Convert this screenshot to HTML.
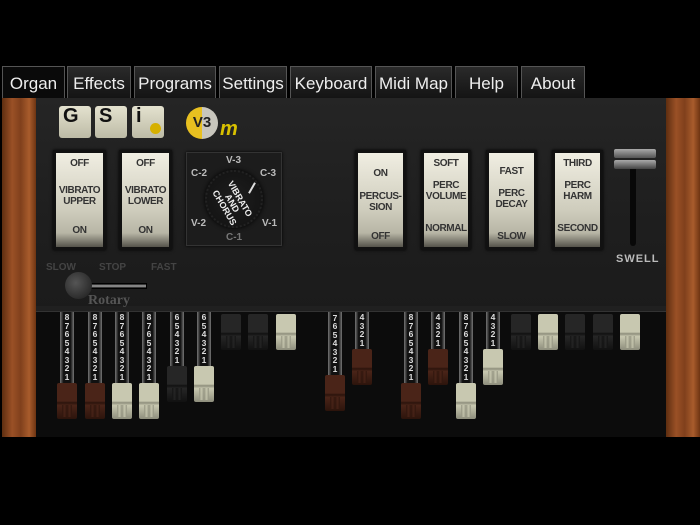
<!DOCTYPE html>
<html><head><meta charset="utf-8"><style>
*{margin:0;padding:0;box-sizing:border-box}
body{width:700px;height:525px;background:#000;position:relative;overflow:hidden;font-family:"Liberation Sans",sans-serif}
.a{position:absolute}
.tab{position:absolute;top:66px;height:32px;background:linear-gradient(#2a2a2a,#141414);border:1px solid #555;border-bottom:none;color:#eee;font-size:17px;text-align:center;line-height:34px}
.tab.on{background:#0a0a0a}
.wood{position:absolute;top:98px;height:339px;width:34px;background:linear-gradient(90deg,#5e2e10,#9a5026 30%,#80401c 55%,#a85c2c 80%,#6e3412)}
.btn{position:absolute;top:106px;width:32px;height:32px;background:linear-gradient(#e4e2cf,#bdbba6);border-radius:3px;font-weight:bold;font-size:20px;color:#111;padding-left:4px;line-height:20px}
.rock{position:absolute;top:150px;height:100px;border:3px solid #111;background:linear-gradient(#f0eee2,#cfcdbd 60%,#b8b6a6 85%,#55534b);color:#333;font-weight:bold;font-size:10px;letter-spacing:-0.4px;text-align:center;box-shadow:0 0 3px #000}
.rock div{position:absolute;left:0;right:0}
.lab{position:absolute;color:#bbb;font-size:10px;font-weight:bold}
.shaft{position:absolute;width:14px;background:linear-gradient(90deg,#777,#111 25%,#111 75%,#777);color:#ddd;font-size:8.5px;font-weight:bold;text-align:center;line-height:8.5px;top:312px}
.cap{position:absolute;width:20px;height:36px;border-radius:2px}
</style></head><body>
<div class="tab on" style="left:2px;width:63px">Organ</div>
<div class="tab" style="left:67px;width:64px">Effects</div>
<div class="tab" style="left:134px;width:82px">Programs</div>
<div class="tab" style="left:219px;width:68px">Settings</div>
<div class="tab" style="left:290px;width:82px">Keyboard</div>
<div class="tab" style="left:375px;width:77px">Midi Map</div>
<div class="tab" style="left:455px;width:63px">Help</div>
<div class="tab" style="left:521px;width:64px">About</div>

<div class="a" style="left:36px;top:98px;width:630px;height:214px;background:linear-gradient(#252525,#1e1e1e 60%,#1b1b1b)"></div>
<div class="a" style="left:36px;top:306px;width:630px;height:6px;background:#202020;border-bottom:1px solid #333"></div>
<div class="a" style="left:36px;top:312px;width:630px;height:125px;background:#0c0c0c"></div>
<div class="wood" style="left:2px"></div>
<div class="wood" style="left:666px"></div>

<div class="btn" style="left:59px">G</div>
<div class="btn" style="left:95px">S</div>
<div class="btn" style="left:132px">i<span class="a" style="left:18px;top:17px;width:11px;height:11px;border-radius:50%;background:#d6b000"></span></div>
<div class="a" style="left:186px;top:107px;width:32px;height:32px;border-radius:50%;background:linear-gradient(90deg,#e8c020 50%,#c8c6bd 50%);color:#222;font-size:15px;font-weight:bold;line-height:32px;text-align:center">V3</div>
<div class="a" style="left:220px;top:118px;color:#d8c000;font-size:20px;font-weight:bold;font-style:italic">m</div>

<div class="rock" style="left:53px;width:53px"><div style="top:5px">OFF</div><div style="top:32px">VIBRATO<br>UPPER</div><div style="top:72px">ON</div></div>
<div class="rock" style="left:119px;width:53px"><div style="top:5px">OFF</div><div style="top:32px">VIBRATO<br>LOWER</div><div style="top:72px">ON</div></div>

<div class="a" style="left:186px;top:152px;width:96px;height:94px;background:#1c1c1c;border:1px solid #333;box-shadow:0 0 3px #000"></div>
<div class="lab" style="left:226px;top:155px">V-3</div>
<div class="lab" style="left:191px;top:168px">C-2</div>
<div class="lab" style="left:260px;top:168px">C-3</div>
<div class="lab" style="left:191px;top:218px">V-2</div>
<div class="lab" style="left:262px;top:218px">V-1</div>
<div class="lab" style="left:226px;top:232px;color:#777">C-1</div>
<div class="a" style="left:205px;top:170px;width:58px;height:58px;border-radius:50%;background:radial-gradient(#1e1e1e,#111);border:2px dotted #222;box-shadow:0 0 5px #000"></div>
<div class="a" style="left:212px;top:190px;color:#eee;font-size:9px;font-weight:bold;line-height:9px;text-align:center;transform:rotate(60deg)">VIBRATO<br>AND<br>CHORUS</div>
<div class="a" style="left:251px;top:182px;width:2px;height:12px;background:#ddd;transform:rotate(30deg)"></div>

<div class="rock" style="left:355px;width:51px"><div style="top:15px">ON</div><div style="top:38px">PERCUS-<br>SION</div><div style="top:78px">OFF</div></div>
<div class="rock" style="left:421px;width:50px"><div style="top:5px">SOFT</div><div style="top:27px">PERC<br>VOLUME</div><div style="top:70px">NORMAL</div></div>
<div class="rock" style="left:486px;width:51px"><div style="top:13px">FAST</div><div style="top:35px">PERC<br>DECAY</div><div style="top:78px">SLOW</div></div>
<div class="rock" style="left:552px;width:51px"><div style="top:5px">THIRD</div><div style="top:27px">PERC<br>HARM</div><div style="top:70px">SECOND</div></div>

<div class="a" style="left:630px;top:160px;width:6px;height:86px;background:#080808;border-radius:3px"></div>
<div class="a" style="left:614px;top:149px;width:42px;height:9px;background:linear-gradient(#aaa,#555);border-radius:2px"></div>
<div class="a" style="left:614px;top:160px;width:42px;height:9px;background:linear-gradient(#aaa,#444);border-radius:2px"></div>
<div class="lab" style="left:616px;top:253px;font-size:11px;letter-spacing:1px">SWELL</div>

<div class="lab" style="left:46px;top:262px;color:#444">SLOW</div>
<div class="lab" style="left:99px;top:262px;color:#444">STOP</div>
<div class="lab" style="left:151px;top:262px;color:#444">FAST</div>
<div class="a" style="left:90px;top:283px;width:57px;height:6px;background:linear-gradient(#111,#aaa,#111);border:1px solid #000"></div>
<div class="a" style="left:65px;top:272px;width:27px;height:27px;border-radius:50%;background:radial-gradient(circle at 40% 40%,#555,#1a1a1a)"></div>
<div class="a" style="left:88px;top:293px;color:#555;font-family:'Liberation Serif',serif;font-weight:bold;font-size:14px">Rotary</div>

<div id="db"></div>
<script>
var bars=[[67,383,'b'],[95,383,'b'],[122,383,'w'],[149,383,'w'],[177,366,'k'],[204,366,'w'],[231,314,'k'],[258,314,'k'],[286,314,'w'],
[335,375,'b'],[362,349,'b'],[411,383,'b'],[438,349,'b'],[466,383,'w'],[493,349,'w'],[521,314,'k'],[548,314,'w'],[575,314,'k'],[603,314,'k'],[630,314,'w']];
var col={b:['#4a2418','#2c140c'],w:['#c8c8b0','#8e8e7c'],k:['#262626','#111']};
var h='';
bars.forEach(function(b){var x=b[0],t=b[1],c=col[b[2]];
if(t>320){var len=t-312,n=Math.min(8,Math.floor((len-2)/8.5));var s='';for(var i=n;i>=1;i--)s+=i+'<br>';
h+='<div class="shaft" style="left:'+(x-7)+'px;height:'+len+'px;padding-top:'+(len-n*8.5-2)+'px">'+s+'</div>';}
h+='<div class="cap" style="left:'+(x-10)+'px;top:'+t+'px;background:linear-gradient('+c[0]+' 0,'+c[0]+' 50%,'+c[1]+' 55%,'+c[0]+' 62%,'+c[1]+' 100%)"><div style="position:absolute;left:5px;top:22px;width:10px;height:12px;background:linear-gradient(90deg,'+c[1]+','+c[0]+','+c[1]+','+c[0]+','+c[1]+');opacity:.8"></div></div>';});
document.getElementById('db').innerHTML=h;
</script>
</body></html>
